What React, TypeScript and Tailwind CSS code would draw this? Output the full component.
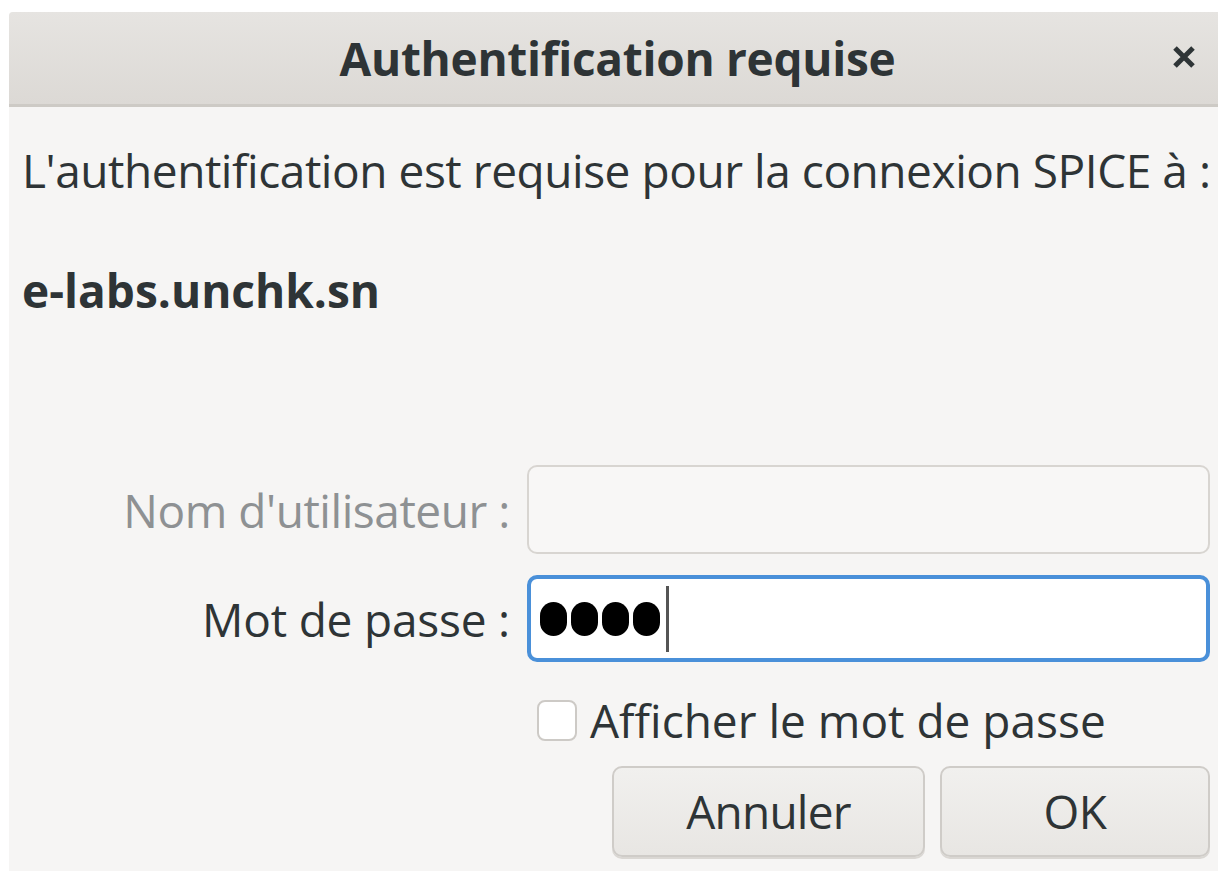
import React from "react";

const font = { fontFamily: '"Open Sans", "Noto Sans", sans-serif' };

export default function App() {
  return (
    <div className="w-[1218px] h-[871px] bg-white pt-[12px] pl-[9px] overflow-hidden" style={font}>
      <div className="w-[1209px] h-[859px] bg-[#f6f5f4] rounded-tl-[4px] flex flex-col">
        {/* header bar */}
        <div className="h-[95px] shrink-0 bg-gradient-to-b from-[#e6e4e1] to-[#dcd9d5] border-b-[3px] border-[#cdcac5] rounded-tl-[4px] flex items-center relative">
          <div className="flex-1 text-center pl-[8px] text-[46px] leading-[50px] font-bold text-[#2e3436] tracking-[-0.3px]">
            Authentification requise
          </div>
          <div className="absolute right-[22px] top-[33px]">
            <svg width="24" height="24" viewBox="0 0 24 24">
              <path d="M3 3 L21 21 M21 3 L3 21" stroke="#2e3436" strokeWidth="5" strokeLinecap="butt" />
            </svg>
          </div>
        </div>

        {/* body */}
        <div className="flex flex-col pl-[13px] pr-[8px] text-[#2e3436]">
          <div className="mt-[38px] text-[46px] leading-[50px] tracking-[-0.45px] whitespace-nowrap">
            L'authentification est requise pour la connexion SPICE à :
          </div>
          <div className="mt-[70px] text-[46px] leading-[50px] font-bold tracking-[0px]">e-labs.unchk.sn</div>

          <div className="mt-[150px] flex flex-col gap-[21px]">
            <div className="flex items-center">
              <div className="w-[505px] text-right pr-[17px] text-[46px] leading-[50px] tracking-[-0.45px] text-[#8e9193]">
                Nom d'utilisateur :
              </div>
              <div className="flex-1 h-[89px] rounded-[10px] border-[2px] border-[#d8d5d1] bg-[#f8f7f6]" />
            </div>
            <div className="flex items-center">
              <div className="w-[505px] text-right pr-[17px] text-[46px] leading-[50px] tracking-[-0.2px] text-[#2e3436]">
                Mot de passe :
              </div>
              <div className="flex-1 h-[87px] rounded-[10px] border-[4px] border-[#4a90d9] bg-white flex items-center pl-[9px] gap-[4px]">
                <span className="w-[27px] h-[34px] rounded-full bg-black" />
                <span className="w-[27px] h-[34px] rounded-full bg-black" />
                <span className="w-[27px] h-[34px] rounded-full bg-black" />
                <span className="w-[27px] h-[34px] rounded-full bg-black" />
                <span className="ml-[2px] w-[3px] h-[66px] bg-[#555]" />
              </div>
            </div>
          </div>

          <div className="mt-[33px] flex items-center pl-[515px]">
            <div className="w-[40px] h-[41px] rounded-[8px] border-[2px] border-[#cdcac6] bg-white" />
            <span className="ml-[13px] text-[46px] tracking-[0px] leading-[50px]">Afficher le mot de passe</span>
          </div>

          <div className="mt-[21px] flex justify-end gap-[15px]">
            <button className="w-[313px] h-[91px] rounded-[10px] border-[2px] border-[#cfccc8] bg-gradient-to-b from-[#f1f0ee] to-[#e8e6e3] text-[46px] tracking-[-0.8px] text-[#2e3436] shadow-[0_2px_0_#dad7d3]">
              Annuler
            </button>
            <button className="w-[270px] h-[91px] rounded-[10px] border-[2px] border-[#cfccc8] bg-gradient-to-b from-[#f1f0ee] to-[#e8e6e3] text-[46px] tracking-[-0.45px] text-[#2e3436] shadow-[0_2px_0_#dad7d3]">
              OK
            </button>
          </div>
        </div>
      </div>
    </div>
  );
}
